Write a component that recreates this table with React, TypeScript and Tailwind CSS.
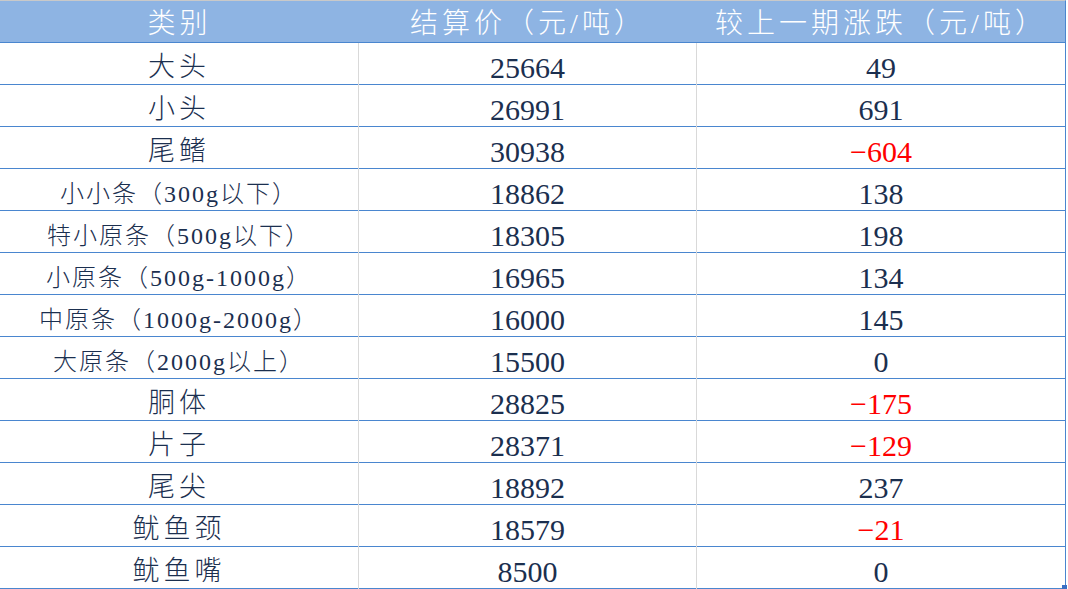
const rows: { name: string; price: string; change: string; small?: boolean }[] = [
  { name: "大头", price: "25664", change: "49" },
  { name: "小头", price: "26991", change: "691" },
  { name: "尾鳍", price: "30938", change: "-604" },
  { name: "小小条（300g以下）", price: "18862", change: "138", small: true },
  { name: "特小原条（500g以下）", price: "18305", change: "198", small: true },
  { name: "小原条（500g-1000g）", price: "16965", change: "134", small: true },
  { name: "中原条（1000g-2000g）", price: "16000", change: "145", small: true },
  { name: "大原条（2000g以上）", price: "15500", change: "0", small: true },
  { name: "胴体", price: "28825", change: "-175" },
  { name: "片子", price: "28371", change: "-129" },
  { name: "尾尖", price: "18892", change: "237" },
  { name: "鱿鱼颈", price: "18579", change: "-21" },
  { name: "鱿鱼嘴", price: "8500", change: "0" },
];

const font = "font-['Liberation_Serif','Noto_Sans_CJK_SC',serif]";

export default function App() {
  return (
    <div className={`h-[589px] w-[1068px] overflow-hidden bg-white ${font}`}>
      <div className="relative w-[1066px] border-t border-r border-t-[#c9c9c9] border-r-[#4a86cf]">
        <div className="grid h-[42px] grid-cols-[359px_338px_1fr] border-b border-[#4a86cf] bg-[#8eb4e3] text-[28px] font-light tracking-[4px] text-white">
          <div className="flex items-center justify-center pt-[2px]">类别</div>
          <div className="flex items-center justify-center pt-[2px]">结算价（元/吨）</div>
          <div className="flex items-center justify-center pt-[2px]">较上一期涨跌（元/吨）</div>
        </div>
        {rows.map((r, i) => (
          <div
            key={i}
            className="grid h-[42px] grid-cols-[359px_338px_1fr] border-b border-[#4a86cf] text-[#1b2f4f]"
          >
            <div
              className={`flex items-center justify-center border-r border-[#d9d9d9] pt-[2px] font-light ${
                r.small ? "text-[24px] tracking-[2px]" : "text-[27px] tracking-[4px]"
              }`}
            >
              {r.name}
            </div>
            <div className="flex items-center justify-center border-r border-[#d9d9d9] pt-[2px] text-[30px]">
              {r.price}
            </div>
            <div
              className={`flex items-center justify-center pt-[2px] text-[30px] ${
                r.change.startsWith("-") ? "text-[#ff0000]" : ""
              }`}
            >
              {r.change.startsWith("-") ? "−" + r.change.slice(1) : r.change}
            </div>
          </div>
        ))}
        <div className="absolute right-[-2px] bottom-[-1px] h-[5px] w-[5px] bg-[#3a6fc4]" />
      </div>
    </div>
  );
}
